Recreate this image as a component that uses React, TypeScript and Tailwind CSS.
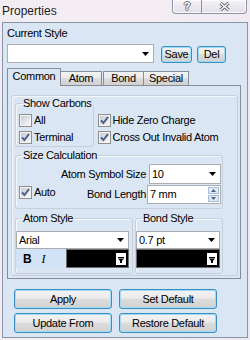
import React from 'react';

const ui = "font-['Liberation_Sans',Arial,sans-serif] text-[11px] tracking-[-0.3px] text-black";
const btnBg = 'bg-[linear-gradient(#f3f3f3,#ebebeb_45%,#dddddd_50%,#d0d0d0)]';

function Check({ checked }: { checked?: boolean }) {
  return (
    <svg width="13" height="13" viewBox="0 0 13 13" className="shrink-0">
      <defs>
        <linearGradient id="cbg" x1="0" y1="0" x2="1" y2="1">
          <stop offset="0" stopColor="#c9ccd2" />
          <stop offset="1" stopColor="#f7f7f7" />
        </linearGradient>
      </defs>
      <rect x="0.5" y="0.5" width="12" height="12" fill="#f4f4f4" stroke="#8f8f8f" />
      <rect x="2" y="2" width="9" height="9" fill="url(#cbg)" />
      {checked && <path d="M3 6.3 L5.4 9 L10 3" fill="none" stroke="#4a5d91" strokeWidth="2" />}
    </svg>
  );
}

function CheckRow({ label, checked }: { label: string; checked?: boolean }) {
  return (
    <div className="flex items-center gap-[2px] h-[17px]">
      <Check checked={checked} />
      <span className="whitespace-nowrap">{label}</span>
    </div>
  );
}

function Arrow() {
  return (
    <svg width="7" height="4" viewBox="0 0 7 4">
      <path d="M0 0H7L3.5 4Z" fill="#000" />
    </svg>
  );
}

function Combo({ text, className }: { text?: string; className: string }) {
  return (
    <div className={`flex items-center border border-[#abadb3] bg-white pl-[2px] ${className}`}>
      <span className="whitespace-nowrap">{text}</span>
      <div className="ml-auto w-[15px] flex justify-center">
        <Arrow />
      </div>
    </div>
  );
}

function Swatch({ className }: { className: string }) {
  return (
    <div className={`flex items-center justify-end border border-[#6d6d6d] bg-black pr-[2px] ${className}`}>
      <svg width="10" height="12" viewBox="0 0 10 12">
        <rect x="0" y="0" width="10" height="12" fill="#fff" />
        <rect x="2" y="4" width="6" height="1" fill="#000" />
        <path d="M2 5.5H8L5 9Z" fill="#000" />
        <rect x="4" y="8" width="2" height="2" fill="#000" />
      </svg>
    </div>
  );
}

function Btn({ children, className }: { children: React.ReactNode; className: string }) {
  return (
    <div
      className={`flex items-center justify-center rounded-[3px] border border-[#3a8ec0] shadow-[inset_0_0_0_1px_#9fdcf7] ${btnBg} ${className}`}
    >
      {children}
    </div>
  );
}

function Group({ title, className, children }: { title: string; className: string; children: React.ReactNode }) {
  return (
    <fieldset className={`border border-[#c5d0da] rounded-[3px] shadow-[inset_1px_1px_0_#f4f8fc] ${className}`}>
      <legend className="whitespace-nowrap overflow-hidden leading-[14px] px-[1px] ml-[3px]">{title}</legend>
      {children}
    </fieldset>
  );
}

function Spin({ text }: { text: string }) {
  return (
    <div className="flex items-center border border-[#abadb3] bg-white pl-[2px] w-[74px] h-[19px]">
      <span>{text}</span>
      <div className="ml-auto mr-[1px] flex flex-col gap-[1px]">
        <div className="w-[11px] h-[7px] border border-[#a9bcd6] bg-[#dfe9f7] flex items-center justify-center">
          <svg width="5" height="3" viewBox="0 0 5 3"><path d="M0 3H5L2.5 0Z" fill="#4d6185" /></svg>
        </div>
        <div className="w-[11px] h-[7px] border border-[#a9bcd6] bg-[#dfe9f7] flex items-center justify-center">
          <svg width="5" height="3" viewBox="0 0 5 3"><path d="M0 0H5L2.5 3Z" fill="#4d6185" /></svg>
        </div>
      </div>
    </div>
  );
}

export default function App() {
  return (
    <div className={`w-[250px] h-[340px] overflow-hidden bg-[linear-gradient(100deg,#f1ecf3,#f7eef4_45%,#ebe7f2)] ${ui}`}>
      {/* title bar */}
      <div className="flex h-[22px]">
        <div className="pl-[2px] leading-[22px] text-[12px] tracking-normal text-[#1b1b1b] [text-shadow:0_0_6px_#fff]">
          Properties
        </div>
        <div className="ml-auto mr-[3px] flex h-[14px] rounded-b-[4px] border border-t-0 border-[#8d93a0] bg-[linear-gradient(#f4f1f6,#e2dfe9)] shadow-[inset_0_0_0_1px_#fbfbfd]">
          <div className="w-[28px] flex items-center justify-center text-[11px] font-bold text-white [text-shadow:1px_0_#6d6d6d,-1px_0_#6d6d6d,0_1px_#6d6d6d,0_-1px_#6d6d6d]">
            ?
          </div>
          <div className="w-[45px] border-l border-[#8d93a0] flex items-center justify-center">
            <svg width="11" height="9" viewBox="0 0 11 9">
              <path d="M1.5 1L9.5 8M9.5 1L1.5 8" stroke="#5f5f5f" strokeWidth="3.2" />
              <path d="M1.5 1L9.5 8M9.5 1L1.5 8" stroke="#fff" strokeWidth="1.4" />
            </svg>
          </div>
        </div>
      </div>

      {/* client */}
      <div className="ml-[2px] w-[246px] h-[316px] border border-[#8a96a8] bg-[#dbe6f4] pl-[4px] pt-[4px]">
        <div className="leading-[13px]">Current Style</div>
        <div className="mt-[4px] flex items-end">
          <Combo className="w-[147px] h-[19px]" />
          <Btn className="ml-[7px] w-[31px] h-[17px]">Save</Btn>
          <Btn className="ml-[5px] w-[29px] h-[17px]">Del</Btn>
        </div>

        {/* tabs */}
        <div className="mt-[5px] flex items-end h-[17px] relative z-10">
          <div className="w-[54px] h-[18px] -mb-px border border-b-0 border-[#898c95] bg-[#dbe6f4] flex items-center justify-center pb-[2px]">
            Common
          </div>
          <div className={`w-[41px] h-[14px] border border-b-0 border-l-0 border-[#898c95] ${btnBg} flex items-center justify-center`}>
            Atom
          </div>
          <div className={`ml-[1px] w-[41px] h-[14px] border border-b-0 border-[#898c95] ${btnBg} flex items-center justify-center`}>
            Bond
          </div>
          <div className={`w-[45px] h-[14px] border border-b-0 border-l-0 border-[#898c95] ${btnBg} flex items-center justify-center`}>
            Special
          </div>
        </div>

        <div className="w-[234px] border border-[#898c95] pl-[3px] pt-[9px] pb-[2px]">
          <div className="w-[227px] border border-[#c5d0da] rounded-[3px] shadow-[inset_1px_1px_0_#f4f8fc] pl-[3px] pb-[1px]">
            <div className="flex">
              <Group title="Show Carbons" className="w-[76px] pl-[3px] pt-[2px]">
                <CheckRow label="All" />
                <CheckRow label="Terminal" checked />
              </Group>
              <div className="ml-[4px] pt-[16px]">
                <CheckRow label="Hide Zero Charge" checked />
                <CheckRow label="Cross Out Invalid Atom" checked />
              </div>
            </div>

            <Group title="Size Calculation" className="mt-[1px] w-[208px] pl-[3px] pr-[1px] pt-[2px] pb-[4px]">
              <div className="flex">
                <div className="self-end mb-[5px] flex items-center gap-[2px] h-[13px]">
                  <Check checked />
                  <span>Auto</span>
                </div>
                <div className="ml-auto flex flex-col gap-[1px]">
                  <div className="flex items-center justify-end h-[20px]">
                    <span className="whitespace-nowrap">Atom Symbol Size</span>
                    <Combo text="10" className="ml-[3px] w-[72px] h-[20px]" />
                  </div>
                  <div className="flex items-center justify-end h-[19px]">
                    <span className="whitespace-nowrap">Bond Length</span>
                    <div className="ml-[1px]">
                      <Spin text="7 mm" />
                    </div>
                  </div>
                </div>
              </div>
            </Group>

            <div className="mt-[2px] flex gap-[2px]">
              <fieldset className="w-[118px] border border-[#c5d0da] rounded-[3px] shadow-[inset_1px_1px_0_#f4f8fc] pr-[3px] pt-[6px] pb-[5px]">
                <legend className="whitespace-nowrap leading-[14px] px-[1px] ml-[6px]">Atom Style</legend>
                <Combo text="Arial" className="w-[113px] h-[18px]" />
                <div className="flex h-[19px]">
                  <div className="w-[50px] bg-[#d2e3f7] flex items-center pl-[7px] gap-[10px]">
                    <span className="font-bold text-[12px]">B</span>
                    <span className="font-['Liberation_Serif',serif] italic text-[12px]">I</span>
                  </div>
                  <Swatch className="w-[63px] h-[19px]" />
                </div>
              </fieldset>
              <fieldset className="w-[88px] border border-[#c5d0da] rounded-[3px] shadow-[inset_1px_1px_0_#f4f8fc] pr-[2px] pt-[6px] pb-[5px]">
                <legend className="whitespace-nowrap leading-[14px] px-[1px] ml-[6px]">Bond Style</legend>
                <Combo text="0.7 pt" className="w-[84px] h-[18px]" />
                <Swatch className="w-[84px] h-[19px]" />
              </fieldset>
            </div>
          </div>
        </div>

        <div className="mt-[10px] ml-[7px] grid grid-cols-[98px_98px] gap-x-[7px] gap-y-[4px]">
          <Btn className="h-[20px]">Apply</Btn>
          <Btn className="h-[20px]">Set Default</Btn>
          <Btn className="h-[20px]">Update From</Btn>
          <Btn className="h-[20px]">Restore Default</Btn>
        </div>
      </div>
    </div>
  );
}
